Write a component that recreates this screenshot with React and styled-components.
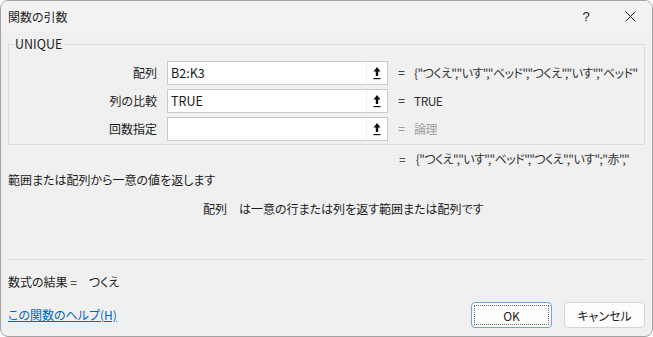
import styled, { createGlobalStyle } from 'styled-components';

const GlobalStyle = createGlobalStyle`
  body {
    margin: 0;
    background: #ffffff;
    font-family: "Noto Sans CJK JP", "Noto Sans", sans-serif;
    font-size: 12px;
    font-feature-settings: "palt";
    color: #1b1b1b;
  }
`;

const Window = styled.div`
  width: 653px;
  height: 337px;
  box-sizing: border-box;
  border: 1px solid #a3a3a3;
  border-radius: 8px;
  overflow: hidden;
  display: flex;
  flex-direction: column;
  background: #f0f0f0;
`;

const TitleBar = styled.div`
  height: 31px;
  display: flex;
  align-items: center;
  padding-left: 7px;
  background: #f3f3f3;
`;

const Title = styled.span`
  flex: 1;
  font-size: 12px;
  line-height: 16px;
`;

const TitleButton = styled.div`
  width: 44px;
  height: 31px;
  display: flex;
  align-items: center;
  justify-content: center;
  font-family: "Liberation Sans", sans-serif;
  font-size: 13px;
`;

const Body = styled.div`
  flex: 1;
  padding: 4px 7px 0 7px;
  display: flex;
  flex-direction: column;
`;

const GroupBox = styled.fieldset`
  margin: 0;
  padding: 9px 0 3px 0;
  border: 1px solid #dcdcdc;
  display: flex;
  flex-direction: column;
  gap: 4px;
`;

const Legend = styled.legend`
  margin-left: 4px;
  padding: 0 2px;
  font-size: 12.5px;
  line-height: 16px;
`;

const Row = styled.div`
  display: grid;
  grid-template-columns: 148px 221px 6px 1fr;
  column-gap: 10px;
  align-items: center;
  height: 24px;
`;

const Label = styled.span`
  text-align: right;
  line-height: 16px;
`;

const InputBox = styled.div`
  height: 24px;
  box-sizing: border-box;
  border: 1px solid #c9c9c9;
  background: #ffffff;
  display: flex;
  align-items: center;
`;

const InputText = styled.span`
  flex: 1;
  padding-left: 3px;
  font-size: 12.5px;
  line-height: 16px;
`;

const RefButton = styled.div`
  width: 20px;
  height: 22px;
  display: flex;
  align-items: center;
  justify-content: center;
  border-left: 1px solid #f0f0f0;
`;

const Equals = styled.span`
  color: ${(p) => (p.muted ? '#9a9a9a' : '#404040')};
  font-family: "Liberation Sans", sans-serif;
`;

const Value = styled.span`
  white-space: nowrap;
  overflow: hidden;
  line-height: 16px;
  letter-spacing: -0.55px;
  color: ${(p) => (p.muted ? '#a0a0a0' : '#303030')};
`;

const ResultLine = styled.div`
  margin-top: 6px;
  padding-left: 391px;
  display: flex;
  gap: 10px;
  line-height: 16px;
  white-space: nowrap;
  overflow: hidden;
  color: #303030;
`;

const Description = styled.div`
  margin-top: ${(p) => p.gap}px;
  padding-left: ${(p) => p.indent || 0}px;
  line-height: 16px;
  white-space: nowrap;
`;

const ArgName = styled.span`
  margin-right: 12px;
`;

const Separator = styled.div`
  margin-top: 42px;
  height: 1px;
  background: #dedede;
`;

const FormulaResult = styled.div`
  margin-top: 14px;
  line-height: 16px;
  display: flex;
  gap: 12px;
`;

const Footer = styled.div`
  margin-top: 12px;
  display: flex;
  align-items: center;
  gap: 12px;
`;

const HelpLink = styled.a`
  flex: 1;
  color: #0067c0;
  text-decoration: underline;
  line-height: 16px;
`;

const Button = styled.button`
  width: 81px;
  height: 26px;
  box-sizing: border-box;
  border-radius: 4px;
  border: 1px solid ${(p) => (p.primary ? '#6fa4dc' : '#d5d5d5')};
  background: #fdfdfd;
  font-family: "Noto Sans CJK JP", "Noto Sans", sans-serif;
  font-feature-settings: "palt";
  font-size: 12px;
  color: #1b1b1b;
  padding: 2px;
  display: flex;
`;

const ButtonFace = styled.span`
  flex: 1;
  display: flex;
  align-items: center;
  justify-content: center;
  border: 1px dotted ${(p) => (p.focused ? '#6a6a6a' : 'transparent')};
`;

const ArrowIcon = () => (
  <svg width="8" height="14" viewBox="0 0 8 14">
    <path d="M4 1 L7.5 5.5 L5.2 5.5 L5.2 10 L2.8 10 L2.8 5.5 L0.5 5.5 Z" fill="#111" />
    <rect x="0.5" y="12" width="7" height="1.2" fill="#111" />
  </svg>
);

const CloseIcon = () => (
  <svg width="11" height="11" viewBox="0 0 11 11">
    <path d="M0.5 0.5 L10.5 10.5 M10.5 0.5 L0.5 10.5" stroke="#1b1b1b" strokeWidth="1" />
  </svg>
);

const args = [
  { label: '配列', input: 'B2:K3', value: '{"つくえ","いす","ベッド","つくえ","いす","ベッド"' },
  { label: '列の比較', input: 'TRUE', value: 'TRUE' },
  { label: '回数指定', input: '', value: '論理', muted: true },
];

export default function App() {
  return (
    <>
      <GlobalStyle />
      <Window>
        <TitleBar>
          <Title>関数の引数</Title>
          <TitleButton>?</TitleButton>
          <TitleButton>
            <CloseIcon />
          </TitleButton>
        </TitleBar>
        <Body>
          <GroupBox>
            <Legend>UNIQUE</Legend>
            {args.map((a) => (
              <Row key={a.label}>
                <Label>{a.label}</Label>
                <InputBox>
                  <InputText>{a.input}</InputText>
                  <RefButton>
                    <ArrowIcon />
                  </RefButton>
                </InputBox>
                <Equals muted={a.muted}>=</Equals>
                <Value muted={a.muted}>{a.value}</Value>
              </Row>
            ))}
          </GroupBox>
          <ResultLine>
            <span>=</span>
            <Value>{'{"つくえ","いす","ベッド","つくえ","いす";"赤","'}</Value>
          </ResultLine>
          <Description gap={5}>範囲または配列から一意の値を返します</Description>
          <Description gap={13} indent={195}>
            <ArgName>配列</ArgName>は一意の行または列を返す範囲または配列です
          </Description>
          <Separator />
          <FormulaResult>
            <span>数式の結果 =</span>
            <span>つくえ</span>
          </FormulaResult>
          <Footer>
            <HelpLink href="#">この関数のヘルプ(H)</HelpLink>
            <Button primary>
              <ButtonFace focused>OK</ButtonFace>
            </Button>
            <Button>
              <ButtonFace>キャンセル</ButtonFace>
            </Button>
          </Footer>
        </Body>
      </Window>
    </>
  );
}
